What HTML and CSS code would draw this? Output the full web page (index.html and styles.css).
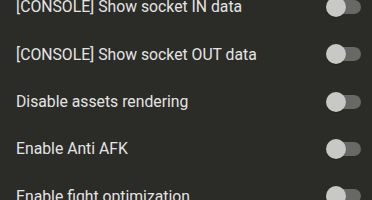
FILE: index.html
```html
<!DOCTYPE html>
<html>
<head>
<meta charset="utf-8">
<link rel="stylesheet" href="styles.css">
</head>
<body>
<div class="list">
  <div class="row"><span class="label">[CONSOLE] Show socket IN data</span><span class="switch"><span class="track"></span><span class="thumb"></span></span></div>
  <div class="row"><span class="label">[CONSOLE] Show socket OUT data</span><span class="switch"><span class="track"></span><span class="thumb"></span></span></div>
  <div class="row"><span class="label">Disable assets rendering</span><span class="switch"><span class="track"></span><span class="thumb"></span></span></div>
  <div class="row"><span class="label">Enable Anti AFK</span><span class="switch"><span class="track"></span><span class="thumb"></span></span></div>
  <div class="row"><span class="label">Enable fight optimization</span><span class="switch"><span class="track"></span><span class="thumb"></span></span></div>
</div>
</body>
</html>
```
FILE: styles.css
```css
html, body {
  margin: 0;
  padding: 0;
  background: #2b2b28;
  overflow: hidden;
}
body {
  width: 372px;
  height: 200px;
  font-family: Roboto, "Liberation Sans", sans-serif;
}
.list {
  display: flex;
  flex-direction: column;
  margin-top: -16.7px;
}
.row {
  height: 47.33px;
  display: flex;
  align-items: center;
  justify-content: space-between;
  padding: 0 11px 0 16px;
}
.label {
  color: #e4e4e2;
  font-size: 15.75px;
}
.switch {
  position: relative;
  width: 35px;
  height: 20px;
  display: flex;
  align-items: center;
}
.track {
  width: 34px;
  height: 14px;
  margin-left: 1px;
  border-radius: 7px;
  background: #686866;
}
.thumb {
  position: absolute;
  left: 0;
  top: 0;
  width: 20px;
  height: 20px;
  border-radius: 50%;
  background: #c8c8c6;
  box-shadow: 0 1px 1px rgba(0,0,0,0.25);
}
```
